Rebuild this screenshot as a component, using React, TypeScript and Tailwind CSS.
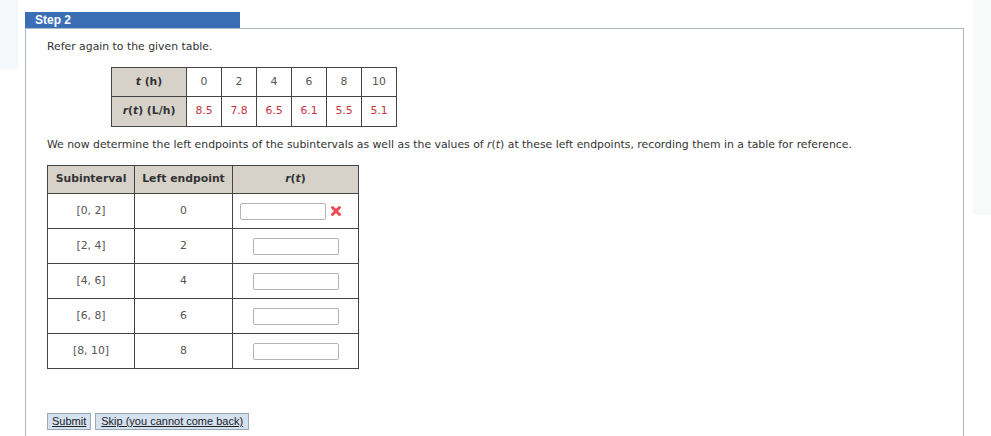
const top = [
  { t: '0', r: '8.5' },
  { t: '2', r: '7.8' },
  { t: '4', r: '6.5' },
  { t: '6', r: '6.1' },
  { t: '8', r: '5.5' },
  { t: '10', r: '5.1' },
];

const rows = [
  { sub: '[0, 2]', left: '0', wrong: true },
  { sub: '[2, 4]', left: '2' },
  { sub: '[4, 6]', left: '4' },
  { sub: '[6, 8]', left: '6' },
  { sub: '[8, 10]', left: '8' },
];

function WrongMark() {
  return (
    <svg width="12" height="12" viewBox="0 0 12 12" className="ml-[4px]">
      <path d="M2.5 2.5 L9.5 9.5 M9.5 2.5 L2.5 9.5" stroke="#ee4a55" strokeWidth="3" strokeLinecap="round" />
    </svg>
  );
}

export default function App() {
  return (
    <div className="flex h-[436px] w-[991px] overflow-hidden bg-white text-[#333] [font-family:'DejaVu_Sans',Verdana,sans-serif]">
      <div className="w-[25px] shrink-0">
        <div className="h-[70px] w-[18px] bg-[#f6f9fc]" />
      </div>

      <div className="w-[939px] shrink-0 pt-[12px]">
        <div className="flex h-[16px] w-[215px] items-center bg-[#3a6eb5] pl-[10px] text-[12px] font-bold text-white [font-family:'Liberation_Sans',Arial,sans-serif]">
          Step 2
        </div>
        <div className="h-[420px] border-l border-r border-t border-[#a9b9c8] pl-[21px] pt-[11px] text-[10.85px]">
          <p className="leading-[14px]">Refer again to the given table.</p>

          <table className="ml-[64px] mt-[13px] border-collapse text-center">
            <tbody>
              <tr className="h-[29px]">
                <th className="w-[75px] border border-[#444] bg-[#d6d2ca] font-bold">
                  <i>t</i> (h)
                </th>
                {top.map((c) => (
                  <td key={c.t} className="w-[35px] border border-[#444] font-normal text-[#555]">
                    {c.t}
                  </td>
                ))}
              </tr>
              <tr className="h-[30px]">
                <th className="border border-[#444] bg-[#d6d2ca] font-bold">
                  <i>r</i>(<i>t</i>) (L/h)
                </th>
                {top.map((c) => (
                  <td key={c.t} className="border border-[#444] text-[#c8323a]">
                    {c.r}
                  </td>
                ))}
              </tr>
            </tbody>
          </table>

          <p className="mt-[11px] leading-[14px]">
            We now determine the left endpoints of the subintervals as well as the values of <i>r</i>(<i>t</i>) at these
            left endpoints, recording them in a table for reference.
          </p>

          <table className="mt-[13px] border-collapse text-center">
            <thead>
              <tr className="h-[28px]">
                <th className="w-[87px] border border-[#444] bg-[#d6d2ca] font-bold">Subinterval</th>
                <th className="w-[98px] border border-[#444] bg-[#d6d2ca] font-bold">Left endpoint</th>
                <th className="w-[126px] border border-[#444] bg-[#d6d2ca] font-bold">
                  <i>r</i>(<i>t</i>)
                </th>
              </tr>
            </thead>
            <tbody>
              {rows.map((r) => (
                <tr key={r.sub} className="h-[35px]">
                  <td className="border border-[#444] text-[#555]">{r.sub}</td>
                  <td className="border border-[#444] text-[#555]">{r.left}</td>
                  <td className="border border-[#444]">
                    <div className={r.wrong ? 'flex items-center pl-[7px]' : 'flex items-center justify-center'}>
                      <input className="h-[17px] w-[86px] rounded-[2px] border border-[#b4b4b4] bg-white" />
                      {r.wrong && <WrongMark />}
                    </div>
                  </td>
                </tr>
              ))}
            </tbody>
          </table>

          <div className="mt-[44px] flex gap-[4px] text-[11px] [font-family:'Liberation_Sans',Arial,sans-serif]">
            <button className="h-[17px] border border-[#9aa8b8] bg-[#d3e1f1] px-[4px] leading-[15px] text-[#222] underline">
              Submit
            </button>
            <button className="h-[17px] border border-[#9aa8b8] bg-[#d3e1f1] px-[5px] leading-[15px] text-[#222] underline">
              Skip (you cannot come back)
            </button>
          </div>
        </div>
      </div>

      <div className="flex-1 pl-[9px]">
        <div className="h-[215px] w-full bg-[#f8f9f9]" />
      </div>
    </div>
  );
}
